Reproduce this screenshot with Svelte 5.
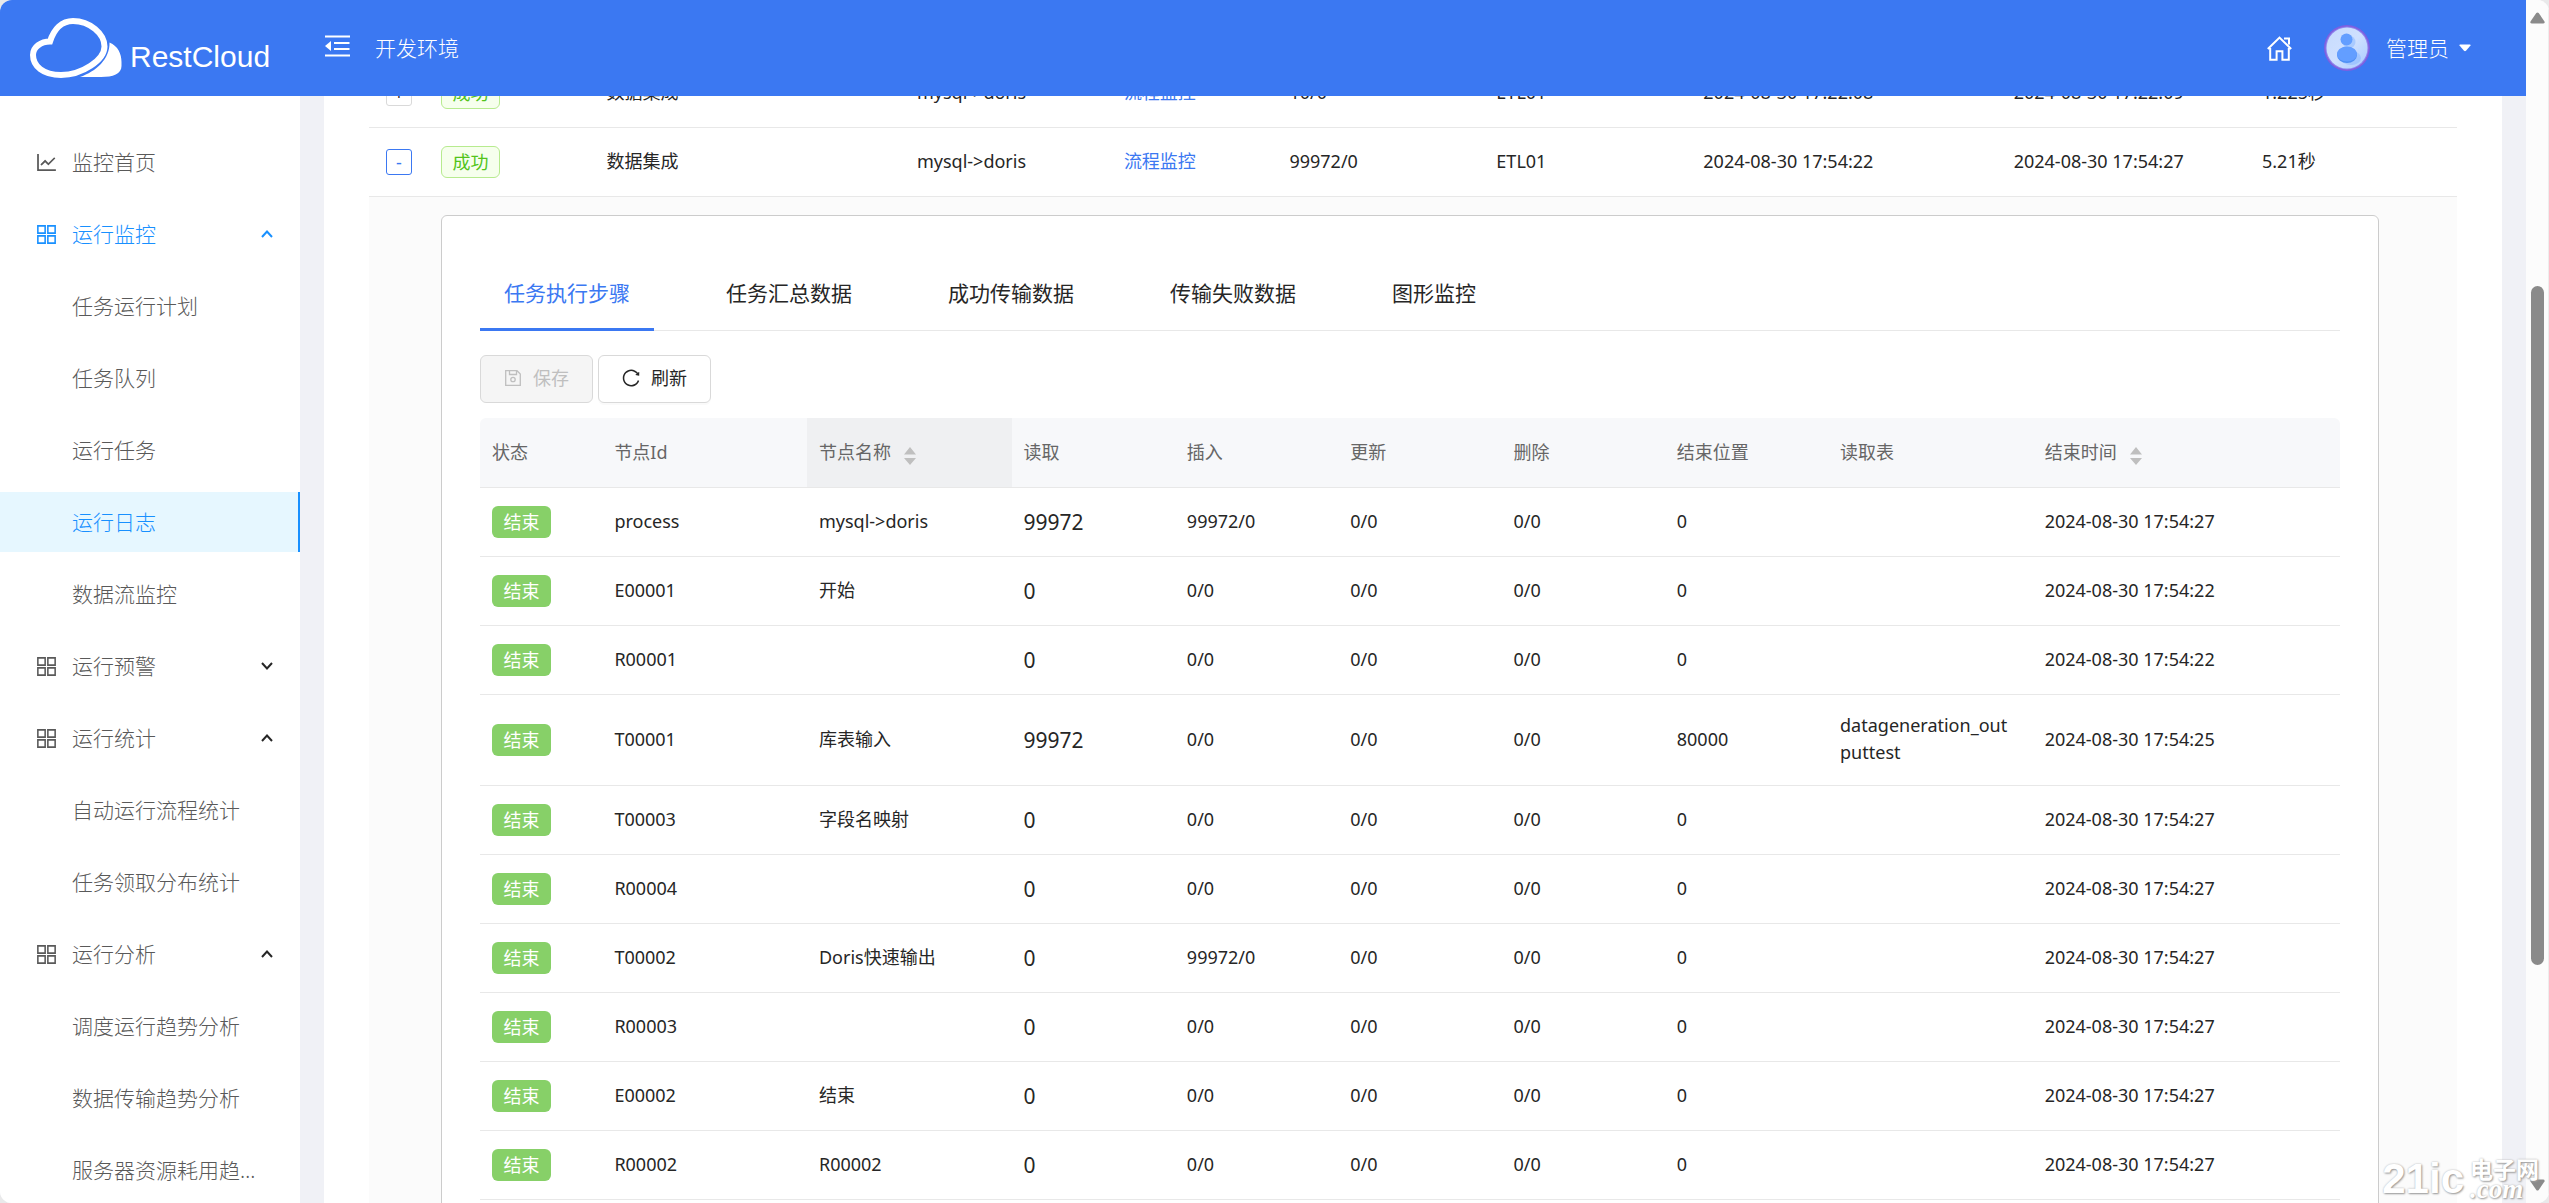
<script>
  const menu = [
    { label: '监控首页', icon: 'chart' },
    { label: '运行监控', icon: 'grid', arrow: 'up', active: true },
    { label: '任务运行计划' },
    { label: '任务队列' },
    { label: '运行任务' },
    { label: '运行日志', selected: true },
    { label: '数据流监控' },
    { label: '运行预警', icon: 'grid', arrow: 'down' },
    { label: '运行统计', icon: 'grid', arrow: 'up' },
    { label: '自动运行流程统计' },
    { label: '任务领取分布统计' },
    { label: '运行分析', icon: 'grid', arrow: 'up' },
    { label: '调度运行趋势分析' },
    { label: '数据传输趋势分析' },
    { label: '服务器资源耗用趋势分析' }
  ];

  const logs = [
    { sign: '+', count: '10/0', start: '2024-08-30 17:22:08', end: '2024-08-30 17:22:09', cost: '1.225秒' },
    { sign: '-', count: '99972/0', start: '2024-08-30 17:54:22', end: '2024-08-30 17:54:27', cost: '5.21秒', open: true }
  ];

  const tabs = ['任务执行步骤', '任务汇总数据', '成功传输数据', '传输失败数据', '图形监控'];
  let current = $state(0);

  const heads = [
    { t: '状态', c: 'w-state' },
    { t: '节点Id', c: 'w-mid' },
    { t: '节点名称', c: 'w-mid', sort: true, sorted: true },
    { t: '读取', c: 'w-num' },
    { t: '插入', c: 'w-num' },
    { t: '更新', c: 'w-num' },
    { t: '删除', c: 'w-num' },
    { t: '结束位置', c: 'w-num' },
    { t: '读取表', c: 'w-mid' },
    { t: '结束时间', c: 'w-rest', sort: true }
  ];

  const day = '2024-08-30 ';
  const steps = [
    ['process', 'mysql->doris', '99972', '99972/0', '0', '', '17:54:27'],
    ['E00001', '开始', '0', '0/0', '0', '', '17:54:22'],
    ['R00001', '', '0', '0/0', '0', '', '17:54:22'],
    ['T00001', '库表输入', '99972', '0/0', '80000', 'datageneration_outputtest', '17:54:25'],
    ['T00003', '字段名映射', '0', '0/0', '0', '', '17:54:27'],
    ['R00004', '', '0', '0/0', '0', '', '17:54:27'],
    ['T00002', 'Doris快速输出', '0', '99972/0', '0', '', '17:54:27'],
    ['R00003', '', '0', '0/0', '0', '', '17:54:27'],
    ['E00002', '结束', '0', '0/0', '0', '', '17:54:27'],
    ['R00002', 'R00002', '0', '0/0', '0', '', '17:54:27']
  ];
</script>

<div class="window">
  <div class="page">
    <header>
      <a class="brand" href="#home">
        <svg class="cloud" viewBox="29 17 94 62" aria-hidden="true">
          <path d="M50 41.500C54 29 62 21 73 21C90 21 104.500 34 104.500 46.500C104.500 60 82 75 61 75C43 75 33 66 33 55C33 47 41 41.500 50 41.500Z" fill="none" stroke="#fff" stroke-width="6" />
          <path d="M109.500 42.500C118 46 121.500 54 121.500 62V66C121.500 74 113 77 101 77H80C96 71.500 110 59 109.500 42.500Z" fill="#fff" />
        </svg>
        <span>RestCloud</span>
      </a>
      <button class="fold" aria-label="收起菜单">
        <svg viewBox="0 0 25 22" aria-hidden="true">
          <path d="M0 1.500H25M9 8H24.500M9 14H24.500M0 20.500H25" fill="none" stroke="#fff" stroke-width="2" />
          <path d="M0 11L6 6V16Z" fill="#fff" />
        </svg>
      </button>
      <span class="env">开发环境</span>
      <a class="home" href="#home" aria-label="首页">
        <svg viewBox="0 0 25 25" aria-hidden="true">
          <path d="M.8 13L12.500 1.600L24.200 13M3.200 12V23.800H9.600V15.200H15.400V23.800H21.800V12M17 2.400H22V8.500" fill="none" stroke="#fff" stroke-width="2" />
        </svg>
      </a>
      <button class="user">
        <svg class="avatar" viewBox="0 0 46 46" aria-hidden="true">
          <defs>
            <linearGradient id="disc" x1="0" y1="0" x2="1" y2="1">
              <stop offset="0" stop-color="#c6dbfd" /><stop offset=".5" stop-color="#cfe0ff" /><stop offset="1" stop-color="#a9cbff" />
            </linearGradient>
          </defs>
          <circle cx="23" cy="23" r="23" fill="#7f5fe0" />
          <circle cx="23" cy="23" r="21.500" fill="#8f86ec" />
          <circle cx="23" cy="23" r="20.500" fill="url(#disc)" />
          <ellipse cx="27" cy="33" rx="10" ry="7" fill="#86b6ff" opacity=".5" />
          <circle cx="25" cy="17" r="6.500" fill="#86b6ff" opacity=".5" />
          <circle cx="22.500" cy="14.500" r="6" fill="#639eff" />
          <ellipse cx="23" cy="30" rx="10" ry="8" fill="#4f8ff5" />
          <ellipse cx="23" cy="29" rx="10" ry="7.500" fill="#639eff" />
        </svg>
        <span>管理员</span>
        <svg class="caret" viewBox="0 0 12 8" aria-hidden="true"><path d="M1 .5H11Q12 .8 11.500 1.600L7 6.800Q6 7.600 5 6.800L.5 1.600Q0 .8 1 .5Z" fill="#fff" /></svg>
      </button>
    </header>

    <div class="body">
      <nav class="side" aria-label="监控菜单">
        {#each menu as m}
          <a href="#menu" class="item" class:active={m.active} class:selected={m.selected}>
            <span class="icon">
              {#if m.icon === 'chart'}
                <svg viewBox="0 0 1024 1024" aria-hidden="true"><path fill="currentColor" d="M888 792H200V168c0-4.400-3.600-8-8-8h-56c-4.400 0-8 3.600-8 8v688c0 4.400 3.600 8 8 8h752c4.400 0 8-3.600 8-8v-56c0-4.400-3.600-8-8-8zM305.800 637.700c3.100 3.100 8.100 3.100 11.300 0l138.300-137.600L583 628.500c3.100 3.100 8.200 3.100 11.300 0l275.400-275.300c3.100-3.100 3.100-8.200 0-11.300l-39.600-39.600c-3.100-3.100-8.200-3.100-11.300 0l-230 229.900L461.400 404c-3.100-3.100-8.200-3.100-11.300 0L266.300 586.700c-3.100 3.100-3.100 8.200 0 11.300l39.500 39.700z" /></svg>
              {:else if m.icon === 'grid'}
                <svg viewBox="0 0 24 24" aria-hidden="true"><path fill="none" stroke="currentColor" stroke-width="1.500" d="M3.700 3.700h7v7h-7zM13.300 3.700h7v7h-7zM3.700 13.300h7v7h-7zM13.300 13.300h7v7h-7z" /></svg>
              {/if}
            </span>
            <span class="label">{m.label}</span>
            {#if m.arrow}
              <svg class="arrow" viewBox="0 0 12 8" aria-hidden="true"><path d={m.arrow === 'up' ? 'M1 7L6 1.500L11 7' : 'M1 1L6 6.500L11 1'} fill="none" stroke="currentColor" stroke-width="2" /></svg>
            {/if}
          </a>
        {/each}
      </nav>

      <main>
        <table class="logs">
          <colgroup>
            <col class="o-exp" /><col class="o-tag" /><col class="o-type" /><col class="o-std" /><col class="o-tag" />
            <col class="o-std" /><col class="o-std" /><col class="o-start" /><col class="o-end" /><col class="o-std" />
          </colgroup>
          <tbody>
            {#each logs as r}
              <tr>
                <td class="exp"><button class="toggle" class:open={r.open} aria-label="展开行">{r.sign}</button></td>
                <td class="mid"><span class="tag ok">成功</span></td>
                <td>数据集成</td>
                <td>mysql->doris</td>
                <td><a href="#flow">流程监控</a></td>
                <td>{r.count}</td>
                <td>ETL01</td>
                <td>{r.start}</td>
                <td>{r.end}</td>
                <td>{r.cost}</td>
              </tr>
            {/each}
            <tr>
              <td class="expanded" colspan="10">
                <section class="panel">
                  <div class="tabs" role="tablist">
                    {#each tabs as t, i}
                      <button role="tab" aria-selected={i === current} class:on={i === current} onclick={() => (current = i)}>{t}</button>
                    {/each}
                  </div>
                  <div class="tools">
                    <button disabled>
                      <svg viewBox="0 0 18 18" aria-hidden="true"><path d="M1.700 1.700H13L16.300 5V16.300H1.700ZM5.500 2V5.500H12.500V2" fill="none" stroke="currentColor" stroke-width="1.300" /><circle cx="9" cy="10.500" r="2.200" fill="none" stroke="currentColor" stroke-width="1.300" /></svg>
                      保存
                    </button>
                    <button>
                      <svg viewBox="64 64 896 896" aria-hidden="true"><path fill="currentColor" d="M909.100 209.300l-56.400 44.100C775.800 155.100 656.200 92 521.900 92 290 92 102.300 279.500 102 511.500 101.700 743.700 289.800 932 521.900 932c181.300 0 335.800-115 394.600-276.100 1.500-4.200-.7-8.900-4.900-10.300l-56.700-19.500a8 8 0 00-10.100 4.800c-1.800 5-3.800 10-5.900 14.900-17.300 41-42.100 77.800-73.700 109.400A344.770 344.770 0 01655.900 829c-42.300 17.900-87.400 27-133.800 27-46.500 0-91.500-9.100-133.800-27A341.500 341.500 0 01279 755.200a342.160 342.160 0 01-73.700-109.400c-17.900-42.400-27-87.400-27-133.900s9.100-91.500 27-133.900c17.300-41 42.100-77.800 73.700-109.400 31.600-31.600 68.400-56.400 109.300-73.800 42.300-17.900 87.400-27 133.800-27 46.500 0 91.500 9.100 133.800 27a341.500 341.500 0 01109.300 73.800c9.900 9.900 19.200 20.400 27.800 31.400l-60.200 47a8 8 0 003 14.100l175.600 43c5 1.200 9.900-2.600 9.900-7.700l.8-180.900c-.1-6.600-7.800-10.300-13-6.200z" /></svg>
                      刷新
                    </button>
                  </div>
                  <table class="steps">
                    <thead>
                      <tr>
                        {#each heads as h}
                          <th class={h.c} class:sorted={h.sorted} scope="col">
                            <span class="head">{h.t}
                              {#if h.sort}
                                <svg viewBox="0 0 12 18" aria-hidden="true"><path d="M6 0L12 7.500H0ZM6 18L12 11H0Z" fill="#bfbfbf" /></svg>
                              {/if}
                            </span>
                          </th>
                        {/each}
                      </tr>
                    </thead>
                    <tbody>
                      {#each steps as s}
                        <tr>
                          <td class="mid"><span class="tag done">结束</span></td>
                          <td>{s[0]}</td>
                          <td>{s[1]}</td>
                          <td class="big mid">{s[2]}</td>
                          <td>{s[3]}</td>
                          <td>0/0</td>
                          <td>0/0</td>
                          <td>{s[4]}</td>
                          <td>{s[5]}</td>
                          <td>{day}{s[6]}</td>
                        </tr>
                      {/each}
                    </tbody>
                  </table>
                </section>
              </td>
            </tr>
          </tbody>
        </table>
      </main>
    </div>
  </div>

  <div class="scroll" aria-hidden="true">
    <svg viewBox="0 0 15 12"><path d="M6.300 1Q7.500 0 8.700 1L14.500 9.500Q15 11.500 13 11.500H2Q0 11.500 .5 9.500Z" fill="#8a8a8a" /></svg>
    <span class="gap-top"></span>
    <span class="thumb"></span>
    <span class="gap-bottom"></span>
    <svg viewBox="0 0 15 12"><path d="M6.300 11Q7.500 12 8.700 11L14.500 2.500Q15 .5 13 .5H2Q0 .5 .5 2.500Z" fill="#8a8a8a" /></svg>
  </div>

  <div class="mark">
    <span class="mark-main">21ic</span>
    <span class="mark-side"><span>电子网</span><em>.com</em></span>
  </div>
</div>

<style>
  :global(body) {
    margin: 0;
    background: #e9e9ea;
  }
  .window,
  .window * {
    box-sizing: border-box;
  }
  .window {
    position: relative;
    display: flex;
    height: 100vh;
    overflow: hidden;
    border-radius: 12px;
    background: #fcfcfc;
    color: #262626;
    font: 18px/27px 'Noto Sans', 'Noto Sans CJK SC', sans-serif;
  }
  button {
    font: inherit;
    color: inherit;
    background: none;
    border: 0;
    padding: 0;
    cursor: pointer;
  }
  a {
    color: #3b78f2;
    text-decoration: none;
  }
  svg {
    display: block;
    flex: none;
  }
  .page {
    flex: 1;
    min-width: 0;
    display: flex;
    flex-direction: column;
  }

  header {
    flex: none;
    display: flex;
    align-items: center;
    height: 96px;
    padding: 0 55px 0 29px;
    background: #3b78f2;
    color: #fff;
    font-size: 21px;
    font-weight: 300;
  }
  .brand {
    display: flex;
    align-items: center;
    gap: 7px;
    width: 296px;
    color: #fff;
    font: 30px/40px 'Liberation Sans', sans-serif;
  }
  .brand span {
    padding-top: 18px;
  }
  .cloud {
    width: 94px;
    height: 62px;
  }
  .fold {
    padding-bottom: 4px;
  }
  .fold svg {
    width: 25px;
    height: 22px;
  }
  .env {
    flex: 1;
    padding-left: 25px;
  }
  .home svg {
    width: 25px;
    height: 25px;
  }
  .user {
    display: flex;
    align-items: center;
    margin-left: 32px;
  }
  .avatar {
    width: 46px;
    height: 46px;
    margin-right: 16px;
  }
  .caret {
    width: 12px;
    height: 8px;
    margin-left: 10px;
  }

  .body {
    flex: 1;
    min-height: 0;
    display: flex;
    background: #f0f1f6;
  }
  .side {
    flex: none;
    width: 300px;
    padding-top: 36px;
    overflow: hidden;
    background: #fff;
    font-weight: 300;
  }
  .item {
    display: flex;
    align-items: center;
    height: 60px;
    margin-bottom: 12px;
    padding: 0 27px 0 34px;
    color: #595959;
    font-size: 21px;
  }
  .item.active,
  .item.selected {
    color: #1890ff;
  }
  .item.selected {
    background: #e6f7ff;
    border-right: 2px solid #1890ff;
  }
  .icon {
    flex: none;
    width: 38px;
  }
  .icon svg {
    width: 25px;
    height: 25px;
  }
  .label {
    flex: 1;
    min-width: 0;
    overflow: hidden;
    text-overflow: ellipsis;
    white-space: nowrap;
  }
  .arrow {
    width: 12px;
    height: 8px;
    color: #262626;
  }
  .active .arrow {
    color: #1890ff;
  }

  main {
    flex: 1;
    min-width: 0;
    margin: 0 24px;
    padding: 0 45px;
    overflow: hidden;
    background: #fff;
  }
  table {
    width: 100%;
    table-layout: fixed;
    border-collapse: separate;
    border-spacing: 0;
  }
  /* the log list is scrolled part-way under the header */
  .logs {
    margin-top: -37px;
  }
  td {
    padding: 17px 12px 19px;
    border-bottom: 1px solid #e8e8e8;
    vertical-align: middle;
  }
  td.mid {
    padding-top: 18px;
    padding-bottom: 18px;
  }
  .o-exp { width: 60px; }
  .o-tag { width: 8%; }
  .o-type { width: 15%; }
  .o-std { width: 10%; }
  .o-start { width: 15%; }
  .o-end { width: 12%; }
  .logs td.exp {
    padding: 0 0 0 17px;
  }
  .toggle {
    display: block;
    width: 26px;
    height: 26px;
    border: 1px solid #d9d9d9;
    border-radius: 3px;
    background: #fff;
    line-height: 20px;
    text-align: center;
  }
  .toggle.open {
    border-color: #3b78f2;
    color: #3b78f2;
  }
  .tag {
    display: block;
    width: 59px;
    height: 32px;
    border-radius: 6px;
    line-height: 30px;
    text-align: center;
  }
  .tag.ok {
    border: 1px solid #b7eb8f;
    background: #f6ffed;
    color: #52c41a;
  }
  .tag.done {
    background: #87d068;
    color: #fff;
    line-height: 32px;
  }

  .logs td.expanded {
    padding: 18px 78px 18px 72px;
    background: #fbfbfb;
  }
  .panel {
    padding: 38px;
    border: 1px solid #ccc;
    border-radius: 6px;
    background: #fff;
  }
  .tabs {
    display: flex;
    gap: 48px;
    box-shadow: inset 0 -1px #e8e8e8;
  }
  .tabs button {
    padding: 23px 24px 19px;
    border-bottom: 3px solid transparent;
    font-size: 21px;
    line-height: 32px;
  }
  .tabs .on {
    border-color: #3b78f2;
    color: #3b78f2;
  }
  .tools {
    display: flex;
    gap: 5px;
    padding: 24px 0 15px;
  }
  .tools button {
    display: flex;
    align-items: center;
    gap: 11px;
    height: 48px;
    padding: 0 23px 2px;
    border: 1px solid #d9d9d9;
    border-radius: 6px;
    background: #fff;
    box-shadow: 0 2px #fafafa;
  }
  .tools button:disabled {
    background: #f5f5f5;
    color: #bfbfbf;
    box-shadow: none;
  }
  .tools svg {
    width: 18px;
    height: 18px;
  }

  .w-state { width: 6.58%; }
  .w-mid { width: 11%; }
  .w-num { width: 8.78%; }
  th {
    height: 70px;
    padding: 0 12px;
    border-bottom: 1px solid #e8e8e8;
    background: #f7f8fa;
    color: #666;
    font-weight: 400;
    text-align: left;
  }
  th:first-child {
    border-top-left-radius: 6px;
  }
  th:last-child {
    border-top-right-radius: 6px;
  }
  th.sorted {
    background: #eff0f2;
  }
  .head {
    display: flex;
    align-items: center;
    gap: 13px;
  }
  .head svg {
    width: 12px;
    height: 18px;
    margin-top: 6px;
  }
  .steps td {
    padding-right: 16px;
    word-break: break-all;
  }
  .steps .big {
    font-size: 21px;
  }

  .scroll {
    flex: none;
    display: flex;
    flex-direction: column;
    align-items: center;
    width: 23px;
    padding: 12px 0;
    border-right: 1px solid #ededed;
    background: #fcfcfc;
  }
  .scroll svg {
    width: 15px;
    height: 12px;
  }
  .gap-top { flex: 262; }
  .thumb {
    flex: 679;
    width: 13px;
    border-radius: 7px;
    background: #8a8a8a;
  }
  .gap-bottom { flex: 214; }

  .mark {
    position: absolute;
    right: 10px;
    bottom: 4px;
    display: flex;
    align-items: center;
    gap: 6px;
    color: #fff;
    font-weight: 700;
    text-shadow: 1px 1px 2px #999, 0 0 2px #bbb;
  }
  .mark-main {
    font: 700 42px/40px 'Liberation Sans Narrow', 'Liberation Sans', sans-serif;
  }
  .mark-side {
    display: flex;
    flex-direction: column;
    font-size: 23px;
    line-height: 20px;
  }
  .mark-side em {
    font: italic 700 27px/20px 'Liberation Serif', serif;
  }
</style>
